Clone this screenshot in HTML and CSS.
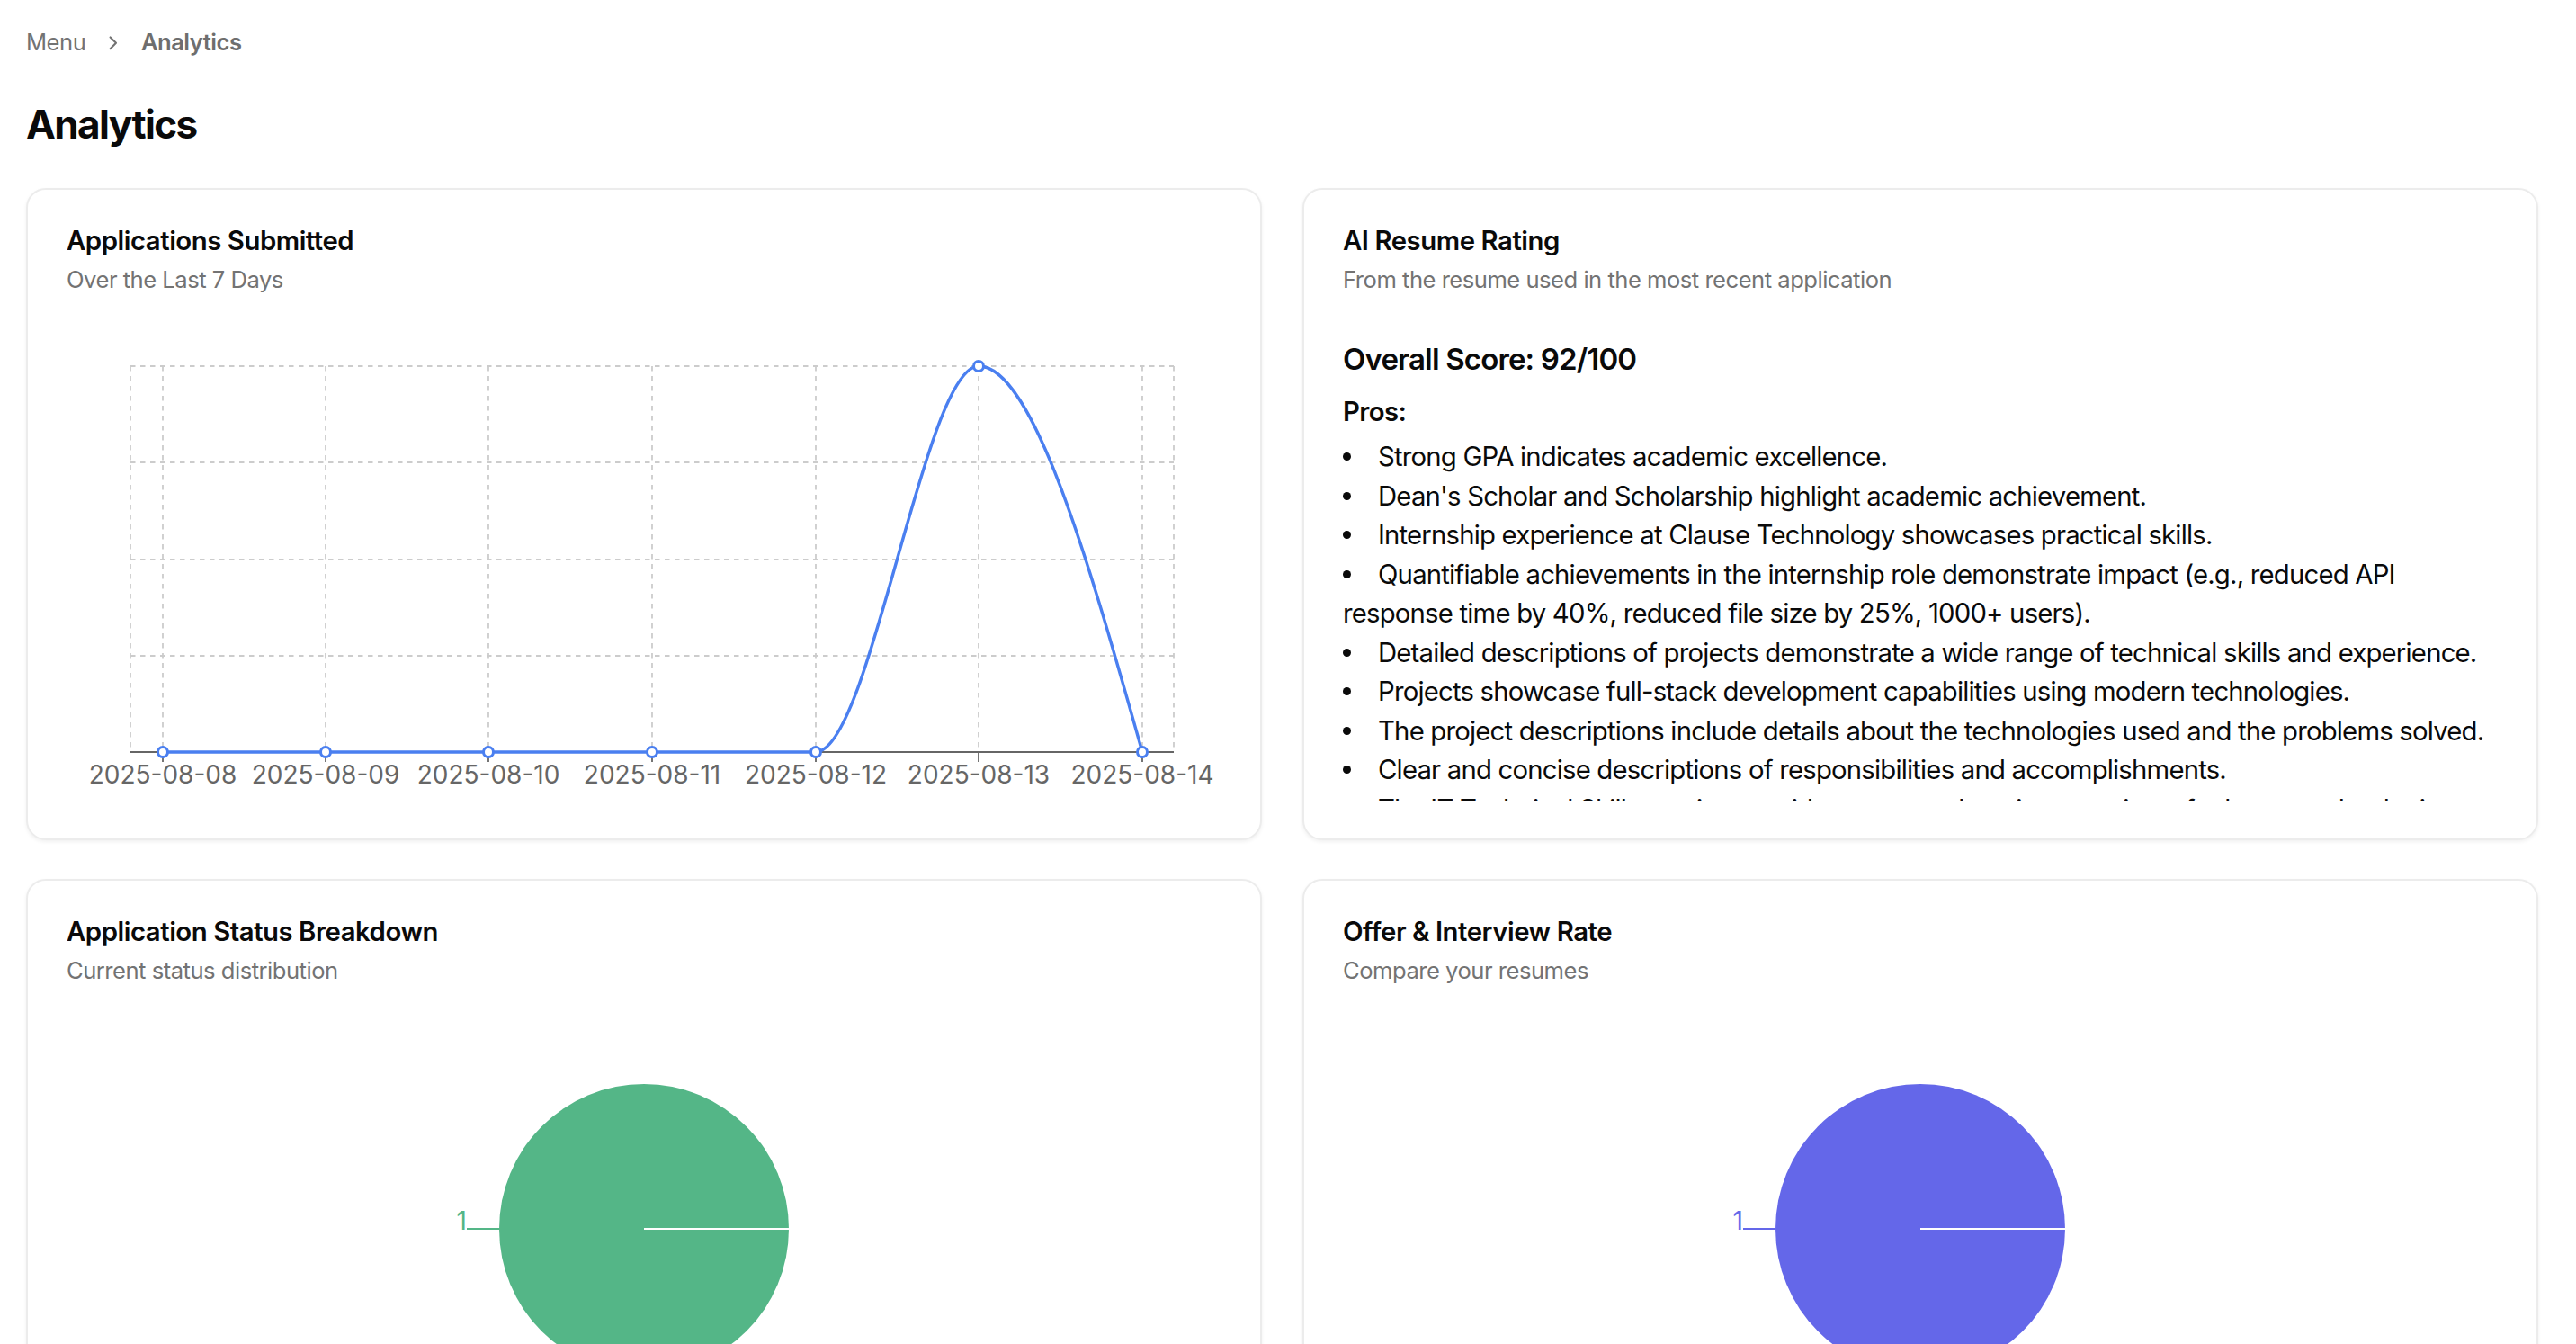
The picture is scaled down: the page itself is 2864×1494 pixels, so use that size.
FILE: index.html
```html
<!DOCTYPE html>
<html lang="en">
<head>
<meta charset="utf-8">
<title>Analytics</title>
<link rel="stylesheet" href="styles.css">
</head>
<body>
<main class="page">
  <nav class="crumbs">
    <span class="crumb">Menu</span>
    <svg class="chev" viewBox="0 0 24 24"><path d="m9 18 6-6-6-6"/></svg>
    <span class="crumb crumb-current">Analytics</span>
  </nav>
  <h1 class="title">Analytics</h1>

  <div class="grid">
    <section class="card">
      <header class="card-head">
        <h2 class="card-title">Applications Submitted</h2>
        <p class="card-desc">Over the Last 7 Days</p>
      </header>
      <div class="card-body chart">
        <svg viewBox="74 374 1284 516" width="1284" height="516">
          <g class="grid-lines">
            <line x1="145" y1="407" x2="1305" y2="407"/>
            <line x1="145" y1="514" x2="1305" y2="514"/>
            <line x1="145" y1="622" x2="1305" y2="622"/>
            <line x1="145" y1="729" x2="1305" y2="729"/>
            <line x1="145" y1="407" x2="145" y2="836"/>
            <line x1="181" y1="407" x2="181" y2="836"/>
            <line x1="362" y1="407" x2="362" y2="836"/>
            <line x1="543" y1="407" x2="543" y2="836"/>
            <line x1="725" y1="407" x2="725" y2="836"/>
            <line x1="907" y1="407" x2="907" y2="836"/>
            <line x1="1088" y1="407" x2="1088" y2="836"/>
            <line x1="1270" y1="407" x2="1270" y2="836"/>
            <line x1="1305" y1="407" x2="1305" y2="836"/>
          </g>
          <g class="axis">
            <line x1="145" y1="836" x2="1305" y2="836"/>
            <line x1="181" y1="836" x2="181" y2="847"/>
            <line x1="362" y1="836" x2="362" y2="847"/>
            <line x1="543" y1="836" x2="543" y2="847"/>
            <line x1="725" y1="836" x2="725" y2="847"/>
            <line x1="907" y1="836" x2="907" y2="847"/>
            <line x1="1088" y1="836" x2="1088" y2="847"/>
            <line x1="1270" y1="836" x2="1270" y2="847"/>
          </g>
          <g class="ticks">
            <text x="181" y="871">2025-08-08</text>
            <text x="362" y="871">2025-08-09</text>
            <text x="543" y="871">2025-08-10</text>
            <text x="725" y="871">2025-08-11</text>
            <text x="907" y="871">2025-08-12</text>
            <text x="1088" y="871">2025-08-13</text>
            <text x="1270" y="871">2025-08-14</text>
          </g>
          <path class="series" d="M181,836 L907,836 C967.3,836 1027.7,407 1088,407 C1148.3,407 1209.7,621.5 1270,836"/>
          <g class="dots">
            <circle cx="181" cy="836" r="5.5"/>
            <circle cx="362" cy="836" r="5.5"/>
            <circle cx="543" cy="836" r="5.5"/>
            <circle cx="725" cy="836" r="5.5"/>
            <circle cx="907" cy="836" r="5.5"/>
            <circle cx="1088" cy="407" r="5.5"/>
            <circle cx="1270" cy="836" r="5.5"/>
          </g>
        </svg>
      </div>
    </section>

    <section class="card">
      <header class="card-head">
        <h2 class="card-title">AI Resume Rating</h2>
        <p class="card-desc">From the resume used in the most recent application</p>
      </header>
      <div class="card-body rating">
        <h3 class="score">Overall Score: 92/100</h3>
        <h4 class="section-label">Pros:</h4>
        <ul class="points">
          <li>Strong GPA indicates academic excellence.</li>
          <li>Dean's Scholar and Scholarship highlight academic achievement.</li>
          <li>Internship experience at Clause Technology showcases practical skills.</li>
          <li>Quantifiable achievements in the internship role demonstrate impact (e.g., reduced API response time by 40%, reduced file size by 25%, 1000+ users).</li>
          <li>Detailed descriptions of projects demonstrate a wide range of technical skills and experience.</li>
          <li>Projects showcase full-stack development capabilities using modern technologies.</li>
          <li>The project descriptions include details about the technologies used and the problems solved.</li>
          <li>Clear and concise descriptions of responsibilities and accomplishments.</li>
          <li>The IT Technical Skills section provides a comprehensive overview of relevant technologies.</li>
        </ul>
        <h4 class="section-label">Cons:</h4>
        <ul class="points">
          <li>The summary section could be more tailored to the target role.</li>
          <li>Some project descriptions could be more concise.</li>
        </ul>
      </div>
    </section>

    <section class="card">
      <header class="card-head">
        <h2 class="card-title">Application Status Breakdown</h2>
        <p class="card-desc">Current status distribution</p>
      </header>
      <div class="card-body chart">
        <svg viewBox="74 1142 1284 516" width="1284" height="516">
          <circle class="slice-green" cx="716" cy="1366" r="161"/>
          <line class="slice-edge" x1="716" y1="1366" x2="877" y2="1366"/>
          <line class="leader-green" x1="555" y1="1366" x2="519" y2="1366"/>
          <text class="pie-label label-green" x="519" y="1367">1</text>
        </svg>
      </div>
    </section>

    <section class="card">
      <header class="card-head">
        <h2 class="card-title">Offer &amp; Interview Rate</h2>
        <p class="card-desc">Compare your resumes</p>
      </header>
      <div class="card-body chart">
        <svg viewBox="1493 1142 1284 516" width="1284" height="516">
          <circle class="slice-indigo" cx="2135" cy="1366" r="161"/>
          <line class="slice-edge" x1="2135" y1="1366" x2="2296" y2="1366"/>
          <line class="leader-indigo" x1="1974" y1="1366" x2="1938" y2="1366"/>
          <text class="pie-label label-indigo" x="1938" y="1367">1</text>
        </svg>
      </div>
    </section>
  </div>
</main>
</body>
</html>
```

FILE: styles.css
```css
* {
  box-sizing: border-box;
  margin: 0;
  padding: 0;
}

html,
body {
  background: #ffffff;
}

body {
  font-family: Inter, "Noto Sans", "Liberation Sans", sans-serif;
  color: #0a0a0a;
}

.page {
  padding: 29px 42px 29px 29px;
}

.crumbs {
  display: flex;
  align-items: center;
  gap: 18px;
  font-size: 25.6px;
  line-height: 36.6px;
  letter-spacing: -0.5px;
  color: #737373;
}

.chev {
  width: 25.6px;
  height: 25.6px;
  fill: none;
  stroke: currentColor;
  stroke-width: 2;
  stroke-linecap: round;
  stroke-linejoin: round;
}

.crumb-current {
  font-weight: 600;
  color: #6e6e6e;
}

.title {
  font-size: 44px;
  line-height: 58.6px;
  font-weight: 700;
  letter-spacing: -1.6px;
  margin: 43px 0 42px;
}

.grid {
  display: grid;
  grid-template-columns: 1fr 1fr;
  column-gap: 45px;
  row-gap: 43px;
}

.card {
  display: flex;
  flex-direction: column;
  gap: 44px;
  background: #ffffff;
  border: 2px solid #ececec;
  border-radius: 22px;
  padding: 42px 43px;
  box-shadow: 0 2px 4px rgba(0, 0, 0, 0.06);
}

.card-head {
  display: flex;
  flex-direction: column;
  gap: 11px;
}

.card-title {
  font-size: 29.3px;
  line-height: 1;
  font-weight: 600;
  letter-spacing: -0.45px;
}

.card-desc {
  font-size: 25.6px;
  line-height: 36.6px;
  letter-spacing: -0.5px;
  color: #737373;
}

.card-body {
  height: 516px;
  overflow: hidden;
}

.chart svg {
  display: block;
}

.grid-lines line {
  stroke: #cccccc;
  stroke-width: 1.8;
  stroke-dasharray: 5.5 5.5;
}

.axis line {
  stroke: #666666;
  stroke-width: 1.8;
}

.ticks text {
  font-family: Inter, "Noto Sans", sans-serif;
  font-size: 28px;
  fill: #666666;
  text-anchor: middle;
}

.series {
  fill: none;
  stroke: #4a7ff0;
  stroke-width: 3.4;
}

.dots circle {
  fill: #ffffff;
  stroke: #4a7ff0;
  stroke-width: 3;
}

.rating {
  color: #0a0a0a;
}

.score {
  font-size: 33px;
  line-height: 51px;
  font-weight: 600;
  letter-spacing: -0.85px;
  margin-bottom: 11px;
}

.section-label {
  font-size: 29.3px;
  line-height: 44px;
  font-weight: 600;
  letter-spacing: -0.6px;
  margin-bottom: 6px;
}

.points {
  list-style: none;
  font-size: 29.3px;
  line-height: 43.5px;
  letter-spacing: -0.8px;
  margin-bottom: 11px;
}

.points li::before {
  content: "";
  display: inline-block;
  width: 9px;
  height: 9px;
  border-radius: 50%;
  background: #0a0a0a;
  margin-right: 30px;
  vertical-align: 0.2em;
}

.slice-green {
  fill: #54b687;
}

.slice-indigo {
  fill: #6467e9;
}

.slice-edge {
  stroke: #ffffff;
  stroke-width: 2;
}

.leader-green {
  stroke: #54b687;
  stroke-width: 1.8;
}

.leader-indigo {
  stroke: #6467e9;
  stroke-width: 1.8;
}

.pie-label {
  font-family: Inter, "Noto Sans", sans-serif;
  font-size: 28px;
  text-anchor: end;
}

.label-green {
  fill: #54b687;
}

.label-indigo {
  fill: #6467e9;
}
```
